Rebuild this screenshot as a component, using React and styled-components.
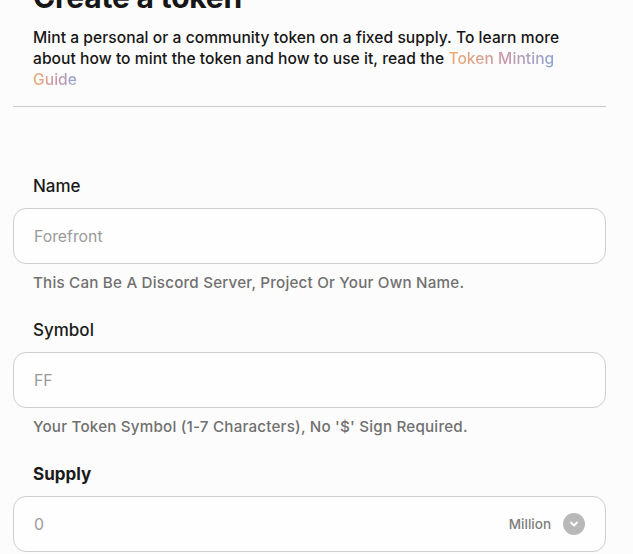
import React from 'react';
import styled, { createGlobalStyle } from 'styled-components';

const GlobalStyle = createGlobalStyle`
  html, body {
    margin: 0;
    padding: 0;
    background: #fdfcfc;
    overflow: hidden;
  }
  body {
    font-family: Inter, "Noto Sans", sans-serif;
    color: #161616;
  }
`;

const Page = styled.div`
  width: 593px;
  padding: 0 0 0 13px;
`;

const Header = styled.div`
  padding: 0 20px;
`;

const Title = styled.h1`
  margin: -21px 0 0;
  font-size: 30px;
  line-height: 36px;
  font-weight: 700;
  letter-spacing: -0.2px;
`;

const Intro = styled.p`
  margin: 12px 0 0;
  font-size: 15.6px;
  line-height: 21px;
  font-weight: 500;
  letter-spacing: 0.05px;
`;

const GuideLink = styled.a`
  background: linear-gradient(90deg, #ecad72 0%, #c797a8 55%, #8fa6d2 100%);
  -webkit-background-clip: text;
  background-clip: text;
  -webkit-box-decoration-break: clone;
  box-decoration-break: clone;
  color: transparent;
  text-decoration: none;
`;

const Divider = styled.hr`
  margin: 16px 0 0;
  border: 0;
  border-top: 1px solid #c9c9c9;
`;

const Form = styled.div`
  padding-top: 68px;
`;

const Field = styled.div`
  margin-bottom: 26px;
`;

const Label = styled.div`
  padding: 0 20px;
  font-size: 17px;
  line-height: 22px;
  font-weight: ${p => (p.$strong ? 700 : 500)};
  color: #1a1a1a;
`;

const InputBox = styled.div`
  margin-top: 11px;
  height: 54px;
  border: 1px solid #cfcfcf;
  border-radius: 13px;
  background: #fffefe;
  display: flex;
  align-items: center;
  padding: 0 20px;
  gap: 12px;
`;

const Input = styled.input`
  flex: 1;
  border: 0;
  outline: 0;
  background: transparent;
  font-family: inherit;
  font-size: 15.8px;
  color: #333;
  padding: 0;

  &::placeholder {
    color: #9a9a9a;
  }
`;

const Unit = styled.span`
  font-size: 13.5px;
  color: #7d7d7d;
  font-weight: 500;
`;

const ChevronBadge = styled.span`
  width: 22px;
  height: 22px;
  border-radius: 50%;
  background: #b8b8b8;
  display: inline-flex;
  align-items: center;
  justify-content: center;
`;

const Hint = styled.div`
  padding: 0 20px;
  margin-top: 9px;
  font-size: 15.2px;
  line-height: 20px;
  letter-spacing: 0.2px;
  color: #707070;
  font-weight: 500;
`;

export default function App() {
  return (
    <>
      <GlobalStyle />
      <Page>
        <Header>
          <Title>Create a token</Title>
          <Intro>
            Mint a personal or a community token on a fixed supply. To learn more about how to mint
            the token and how to use it, read the <GuideLink href="#">Token Minting Guide</GuideLink>
          </Intro>
        </Header>
        <Divider />
        <Form>
          <Field>
            <Label>Name</Label>
            <InputBox>
              <Input placeholder="Forefront" />
            </InputBox>
            <Hint>This Can Be A Discord Server, Project Or Your Own Name.</Hint>
          </Field>
          <Field>
            <Label>Symbol</Label>
            <InputBox>
              <Input placeholder="FF" />
            </InputBox>
            <Hint>Your Token Symbol (1-7 Characters), No '$' Sign Required.</Hint>
          </Field>
          <Field>
            <Label $strong>Supply</Label>
            <InputBox>
              <Input placeholder="0" />
              <Unit>Million</Unit>
              <ChevronBadge>
                <svg width="12" height="12" viewBox="0 0 12 12" fill="none">
                  <path d="M3 4.5 L6 7.5 L9 4.5" stroke="#fff" strokeWidth="1.8" strokeLinecap="round" strokeLinejoin="round" />
                </svg>
              </ChevronBadge>
            </InputBox>
          </Field>
        </Form>
      </Page>
    </>
  );
}
